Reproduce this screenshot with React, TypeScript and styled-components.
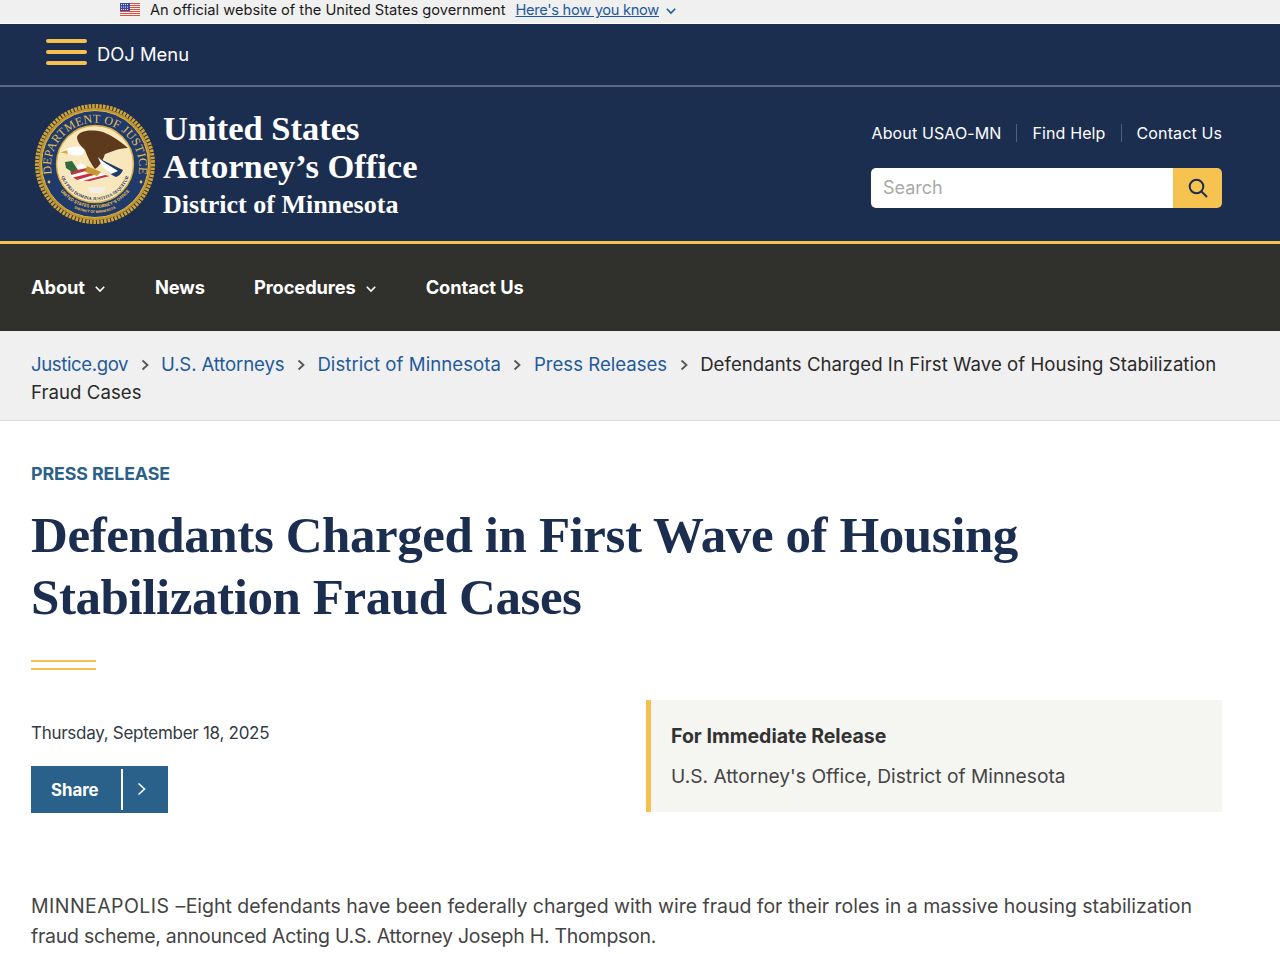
import React from "react";
import styled, { createGlobalStyle } from "styled-components";

const Global = createGlobalStyle`
  html, body { margin: 0; padding: 0; background: #fff; }
  body { font-family: Inter, "Liberation Sans", sans-serif; color: #323a45; overflow: hidden; height: 954px; }
  * { box-sizing: border-box; }
`;
const sans = `Inter, "Liberation Sans", sans-serif`;
const serif = `"Liberation Serif", "DejaVu Serif", serif`;

const GovBanner = styled.div`
  height: 24px; background: #f0f0f0; border-bottom: 1px solid #fff; display: flex; align-items: center;
  padding: 0 0 3px 120px; font-size: 14.65px; color: #1b1b1b;
`;
const GovText = styled.span` margin-left: 10px; `;
const GovLink = styled.a` margin-left: 10px; color: #1e5a9e; text-decoration: underline; letter-spacing: -0.3px; `;
const GovChevron = styled.span` margin-left: 6px; display: flex; color: #1e5a9e; margin-top: 2px; `;
const MenuBar = styled.div`
  height: 63px; background: #1c2e50; border-bottom: 2px solid #5c6b85; display: flex; align-items: center; padding: 0 0 2px 46px; gap: 10px;
`;
const Burger = styled.div` width: 41px; display: flex; flex-direction: column; gap: 7px; margin-bottom: 3px; `;
const BurgerBar = styled.span` display: block; height: 4px; border-radius: 2px; background: #f6c04f; `;
const MenuLabel = styled.span` color: #fff; font-size: 18.4px; `;
const Header = styled.header`
  height: 154px; background: #1c2e50; display: flex; justify-content: space-between; align-items: center; padding: 0 58px 0 35px;
`;
const Brand = styled.div` display: flex; align-items: center; gap: 8px; `;
const BrandText = styled.div` display: flex; flex-direction: column; color: #fff; font-family: ${serif}; font-weight: 700; padding-top: 5px; `;
const BrandLine = styled.div<{ $size: number; $lh: number }>`
  font-size: ${p => p.$size}px; line-height: ${p => p.$lh}px; white-space: nowrap;
`;
const HeaderRight = styled.div` display: flex; flex-direction: column; gap: 26px; width: 351px; margin-top: 2px; `;
const TopLinks = styled.nav` display: flex; justify-content: flex-end; align-items: center; white-space: nowrap; margin-top: 1px; `;
const TopLink = styled.a<{ $sep?: boolean }>`
  color: #fff; font-size: 16px; line-height: 18px; letter-spacing: 0.12px;
  ${p => p.$sep ? `border-left: 1px solid #4f5e7a; margin-left: 15px; padding-left: 15px;` : ""}
`;
const Search = styled.div` height: 40px; display: flex; border-radius: 5px; overflow: hidden; `;
const SearchInput = styled.div` flex: 1; background: #fff; color: #a9a9a9; font-size: 18px; display: flex; align-items: center; padding-left: 12px; `;
const SearchButton = styled.div` width: 49px; background: #f6c250; display: flex; align-items: center; justify-content: center; color: #1c2e50; `;
const GoldRule = styled.div` height: 3px; background: #f6c04f; `;
const Nav = styled.nav` height: 87px; background: #30302c; display: flex; align-items: center; padding: 0 0 2px 31px; gap: 49px; `;
const NavItem = styled.a` color: #fff; font-weight: 700; font-size: 18.3px; display: flex; align-items: center; gap: 9px; letter-spacing: -0.1px; `;
const NavChevron = styled.span` display: flex; margin-top: 5px; `;
const Crumbs = styled.div`
  height: 90px; background: #f0f0f0; border-bottom: 1px solid #dcdcdc; padding: 19px 50px 0 31px; font-size: 18.6px; line-height: 28px; color: #2a2a2a;
`;
const CrumbLink = styled.a<{ $ls?: number }>` color: #1f5a9c; letter-spacing: ${p => p.$ls ?? 0}px; `;
const CrumbCurrent = styled.span` letter-spacing: 0.05px; `;
const CrumbSep = styled.span`
  display: inline-flex; width: 33px; height: 14px; justify-content: center; align-items: center; vertical-align: -1px; color: #555;
`;
const Main = styled.main` padding: 42px 58px 0 31px; `;
const Eyebrow = styled.div` font-size: 17.8px; line-height: 22px; font-weight: 700; color: #2a618b; letter-spacing: -0.1px; `;
const Title = styled.h1`
  margin: 19px 0 0; font-family: ${serif}; font-weight: 700; font-size: 51px; line-height: 62px; color: #1c2e50; letter-spacing: -0.42px;
`;
const Accent = styled.div` width: 65px; height: 10px; margin-top: 32px; border-top: 2px solid #f6c04f; border-bottom: 2px solid #f6c04f; `;
const Meta = styled.div` display: grid; grid-template-columns: 615px 576px; margin-top: 30px; `;
const MetaLeft = styled.div` padding-top: 22px; `;
const DateText = styled.div` font-size: 17px; line-height: 22px; color: #323a45; letter-spacing: -0.28px; `;
const Share = styled.div` margin-top: 22px; width: 137px; height: 47px; background: #2a618b; display: flex; align-items: center; color: #fff; `;
const ShareLabel = styled.span` width: 90px; padding-left: 20px; font-weight: 700; font-size: 16.8px; `;
const ShareDivider = styled.span` width: 2px; height: 41px; background: #fff; `;
const ShareIcon = styled.span` flex: 1; display: flex; justify-content: center; padding-right: 7px; margin-top: -2px; `;
const ReleaseBox = styled.aside` height: 112px; background: #f5f6f2; border-left: 5px solid #f6c04f; padding: 22px 20px 0 20px; `;
const ReleaseTitle = styled.div` font-weight: 700; font-size: 19.5px; line-height: 28px; color: #323232; `;
const ReleaseText = styled.div` margin-top: 12px; font-size: 19.2px; line-height: 28px; color: #444; `;
const Body = styled.p` margin: 78px 0 0; font-size: 19.5px; line-height: 30px; color: #444; `;
const BodySpan = styled.span<{ $ls: number }>` letter-spacing: ${p => p.$ls}px; `;

const Chevron = ({ size = 12 }: { size?: number }) => (
  <svg width={size} height={size} viewBox="0 0 12 12" fill="none" stroke="currentColor" strokeWidth="1.6"><path d="M1.8 3.8 6 8l4.2-4.2" /></svg>
);
const CrumbChevron = () => (
  <svg width="10" height="14" viewBox="0 0 10 14" fill="none" stroke="currentColor" strokeWidth="1.8"><path d="M2.5 2.5 7.5 7l-5 4.5" /></svg>
);

const Flag = () => (
  <svg width="20" height="14" viewBox="0 0 20 14">
    <rect width="20" height="14" fill="#fff" />
    {[0, 2, 4, 6, 8, 10, 12].map(y => <rect key={y} y={y} width="20" height="1.1" fill="#d8503f" />)}
    <rect width="10" height="8" fill="#3b4a9a" />
    {[1.5, 3.5, 5.5, 7.5].flatMap(x => [1.5, 4, 6.5].map(y => <circle key={x + "-" + y} cx={x} cy={y} r="0.55" fill="#fff" />))}
  </svg>
);

const Seal = () => (
  <svg width="120" height="120" viewBox="0 0 120 120">
    <defs>
      <path id="topArc" d="M17 72 A44 44 0 1 1 103 72" />
      <path id="midArc" d="M23.1 84 A44 44 0 0 0 96.9 84" />
      <path id="lowArc" d="M28.5 97.5 A49 49 0 0 0 91.5 97.5" />
      <path id="mottoArc" d="M24.5 66.3 A36 36 0 0 0 95.5 66.3" />
    </defs>
    <circle cx="60" cy="60" r="58" fill="none" stroke="#d1a332" strokeWidth="4" strokeDasharray="2.6 1" />
    <circle cx="60" cy="60" r="56" fill="#c2962c" />
    <circle cx="60" cy="60" r="53.5" fill="#1f3a6b" stroke="#e4bb4c" strokeWidth="1" />
    <circle cx="60" cy="60" r="38.5" fill="#f8e7bd" stroke="#d9ae40" strokeWidth="1.4" />
    <text fontFamily={serif} fontSize="12" fill="#e8c15a" letterSpacing="0.3" textAnchor="middle"><textPath href="#topArc" startOffset="50%">DEPARTMENT OF JUSTICE</textPath></text>
    <text fontFamily={sans} fontSize="4.3" fontWeight="700" fill="#e8c15a" textAnchor="middle"><textPath href="#midArc" startOffset="50%">UNITED STATES ATTORNEY'S OFFICE</textPath></text>
    <text fontFamily={sans} fontSize="3.4" fontWeight="700" fill="#e8c15a" textAnchor="middle"><textPath href="#lowArc" startOffset="50%">DISTRICT OF MINNESOTA</textPath></text>
    <text fontFamily={serif} fontSize="4.6" fontWeight="700" fill="#1f2f52" textAnchor="middle"><textPath href="#mottoArc" startOffset="50%">QUI PRO DOMINA JUSTITIA SEQUITUR</textPath></text>
    <circle cx="14" cy="78" r="1.4" fill="#e8c15a" /><circle cx="106" cy="78" r="1.4" fill="#e8c15a" />
    <path d="M42 33 C44 27 54 25 68 28 C78 32 86 38 93 44 C84 44 76 48 70 50 C68 56 65 62 60 65 C56 60 52 52 50 46 C46 42 42 38 42 33Z" fill="#5e3a1c" />
    <path d="M26 48 C31 43 40 42 46 43 C50 45 50 49 47 51 C42 52 36 51 32 50 L26 49.5Z" fill="#fff" />
    <path d="M25 48.5 L32 46 L33 50Z" fill="#e2a932" />
    <path d="M63 53 C68 57 76 60 88 66 C86 70 84 72 81 73 C74 70 68 64 63 53Z" fill="#1f3a6b" />
    <path d="M63 53 C70 60 76 62 83 67 L76 70 C70 66 65 60 63 53Z" fill="#fff" />
    <path d="M34 68 L46 59 L56 66 L76 72 C66 76 46 80 38 74Z" fill="#fff" />
    <path d="M35 67.5 L52 64 L54 66 L36.5 71Z M38 73.5 L60 68 L64 69.5 L42 76Z M48 76.8 L70 71 L75 72 L55 77Z" fill="#c8323c" />
    <path d="M52 62 L66 68 L62 72 L50 68Z" fill="#c69a2e" />
    <path d="M30 58 L37 57 L43 66 L37 68 L31 64Z" fill="#2f6b3c" />
    <path d="M52 83 h19 l-3 6 h-13z" fill="#f3efe2" />
  </svg>
);

export default function App() {
  return (
    <>
      <Global />
      <GovBanner>
        <Flag />
        <GovText>An official website of the United States government</GovText>
        <GovLink>Here's how you know</GovLink>
        <GovChevron><Chevron /></GovChevron>
      </GovBanner>
      <MenuBar>
        <Burger><BurgerBar /><BurgerBar /><BurgerBar /></Burger>
        <MenuLabel>DOJ Menu</MenuLabel>
      </MenuBar>
      <Header>
        <Brand>
          <Seal />
          <BrandText>
            <BrandLine $size={34.5} $lh={38}>United States</BrandLine>
            <BrandLine $size={34.5} $lh={38}>Attorney’s Office</BrandLine>
            <BrandLine $size={26} $lh={40}>District of Minnesota</BrandLine>
          </BrandText>
        </Brand>
        <HeaderRight>
          <TopLinks>
            <TopLink>About USAO-MN</TopLink>
            <TopLink $sep>Find Help</TopLink>
            <TopLink $sep>Contact Us</TopLink>
          </TopLinks>
          <Search>
            <SearchInput>Search</SearchInput>
            <SearchButton>
              <svg width="20" height="20" viewBox="0 0 20 20" fill="none" stroke="currentColor" strokeWidth="2"><circle cx="8.5" cy="8.5" r="6.8" /><path d="M13.4 13.4 19 19" /></svg>
            </SearchButton>
          </Search>
        </HeaderRight>
      </Header>
      <GoldRule />
      <Nav>
        <NavItem>About <NavChevron><Chevron /></NavChevron></NavItem>
        <NavItem>News</NavItem>
        <NavItem>Procedures <NavChevron><Chevron /></NavChevron></NavItem>
        <NavItem>Contact Us</NavItem>
      </Nav>
      <Crumbs>
        <CrumbLink $ls={-0.4}>Justice.gov</CrumbLink>
        <CrumbSep><CrumbChevron /></CrumbSep>
        <CrumbLink $ls={-0.14}>U.S. Attorneys</CrumbLink>
        <CrumbSep><CrumbChevron /></CrumbSep>
        <CrumbLink $ls={0.05}>District of Minnesota</CrumbLink>
        <CrumbSep><CrumbChevron /></CrumbSep>
        <CrumbLink>Press Releases</CrumbLink>
        <CrumbSep><CrumbChevron /></CrumbSep>
        <CrumbCurrent>Defendants Charged In First Wave of Housing Stabilization Fraud Cases</CrumbCurrent>
      </Crumbs>
      <Main>
        <Eyebrow>PRESS RELEASE</Eyebrow>
        <Title>Defendants Charged in First Wave of Housing<br />Stabilization Fraud Cases</Title>
        <Accent />
        <Meta>
          <MetaLeft>
            <DateText>Thursday, September 18, 2025</DateText>
            <Share>
              <ShareLabel>Share</ShareLabel>
              <ShareDivider />
              <ShareIcon><svg width="12" height="14" viewBox="0 0 12 14" fill="none" stroke="#fff" strokeWidth="1.6"><path d="M2.5 1.5 8.5 7l-6 5.5" /></svg></ShareIcon>
            </Share>
          </MetaLeft>
          <ReleaseBox>
            <ReleaseTitle>For Immediate Release</ReleaseTitle>
            <ReleaseText>U.S. Attorney's Office, District of Minnesota</ReleaseText>
          </ReleaseBox>
        </Meta>
        <Body>
          <BodySpan $ls={0.45}>MINNEAPOLIS –</BodySpan>
          <BodySpan $ls={-0.02}>Eight defendants have been federally charged with wire fraud for their roles in a massive housing stabilization </BodySpan>
          <BodySpan $ls={-0.25}>fraud scheme, announced Acting U.S. Attorney Joseph H. Thompson.</BodySpan>
        </Body>
      </Main>
    </>
  );
}
